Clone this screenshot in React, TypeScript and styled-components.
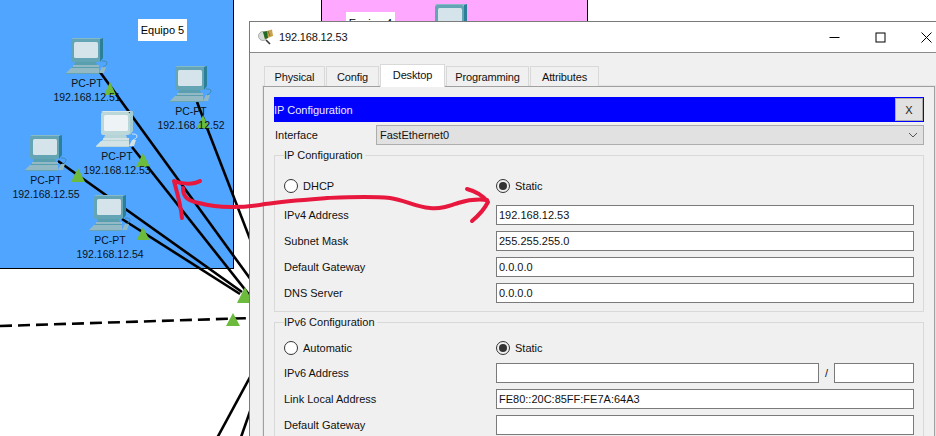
import React from "react"
import styled, { createGlobalStyle } from "styled-components"

const GlobalStyle = createGlobalStyle`
  body {
    margin: 0;
    background: #fff;
    font-family: "Liberation Sans", Arial, sans-serif;
  }
`

const Desktop = styled.div`
  position: relative;
  width: 936px;
  height: 436px;
  overflow: hidden;
  background: #fff;
`

const Zone = styled.div<{ $x: number; $w: number; $h: number; $color: string }>`
  position: absolute;
  left: ${props => props.$x}px;
  top: 0;
  width: ${props => props.$w}px;
  height: ${props => props.$h}px;
  background: ${props => props.$color};
  border: 1px solid #000;
  border-top: none;
  box-sizing: border-box;
`

const ZoneLabel = styled.div<{ $x: number; $y: number }>`
  position: absolute;
  left: ${props => props.$x}px;
  top: ${props => props.$y}px;
  width: 49px;
  height: 22px;
  background: #fff;
  color: #000;
  font-size: 11px;
  line-height: 22px;
  text-align: center;
`

const LinkLayer = styled.svg`
  position: absolute;
  left: 0;
  top: 0;
`

const Node = styled.div<{ $cx: number; $y: number }>`
  position: absolute;
  left: ${props => props.$cx - 45}px;
  top: ${props => props.$y}px;
  width: 90px;
  display: flex;
  flex-direction: column;
  align-items: center;
  color: #0b1320;
  font-size: 10.5px;
  line-height: 14px;
`

const NodeIcon = styled.svg`
  display: block;
`

const Window = styled.div`
  position: absolute;
  left: 249px;
  top: 21px;
  width: 688px;
  height: 500px;
  box-sizing: border-box;
  border: 1px solid #7a7a7a;
  background: #f0f0f0;
  color: #111;
  font-size: 11px;
`

const TitleBar = styled.div`
  height: 30px;
  display: flex;
  align-items: center;
  gap: 5px;
  padding-left: 8px;
  background: #fff;
  border-bottom: 1px solid #8a8a8a;
`

const TitleText = styled.div`
  flex: 1;
  font-size: 11px;
  letter-spacing: -0.15px;
  color: #111;
`

const WindowControls = styled.div`
  display: flex;
  align-items: center;
  gap: 35px;
  padding-right: 4px;
`

const WindowBody = styled.div`
  padding: 11px 1px 0 13px;
`

const TabRow = styled.div`
  display: flex;
  align-items: flex-end;
  gap: 1px;
  height: 22px;
  padding-left: 1px;
`

const Tab = styled.div<{ $width: number; $active?: boolean }>`
  position: relative;
  width: ${props => props.$width}px;
  height: ${props => (props.$active ? 23 : 20)}px;
  margin-bottom: ${props => (props.$active ? -1 : 0)}px;
  box-sizing: border-box;
  display: flex;
  align-items: center;
  justify-content: center;
  background: ${props => (props.$active ? "#fff" : "#f0f0f0")};
  border: 1px solid #d9d9d9;
  border-bottom: none;
  padding-bottom: ${props => (props.$active ? 3 : 0)}px;
  letter-spacing: -0.15px;
`

const Panel = styled.div`
  border: 1px solid #a0a0a0;
  padding: 10px;
  height: 400px;
  outline: 1px solid #e3e3e3;
`

const BlueBar = styled.div`
  height: 25px;
  display: flex;
  align-items: center;
  justify-content: space-between;
  background: #0000ff;
  color: #eef;
  padding-right: 1px;
`

const CloseButton = styled.div`
  width: 28px;
  height: 23px;
  box-sizing: border-box;
  display: flex;
  align-items: center;
  justify-content: center;
  background: #e1e1e1;
  border: 1px solid #adadad;
  color: #222;
  font-size: 11px;
`

const InterfaceRow = styled.div`
  display: flex;
  align-items: center;
  margin-top: 3px;
  height: 20px;
`

const InterfaceLabel = styled.div`
  width: 102px;
  padding-left: 1px;
  box-sizing: border-box;
`

const Select = styled.div`
  flex: 1;
  height: 20px;
  box-sizing: border-box;
  display: flex;
  align-items: center;
  justify-content: space-between;
  padding: 0 5px 0 3px;
  background: #e1e1e1;
  border: 1px solid #adadad;
`

const Group = styled.fieldset<{ $gapTop: number; $padTop: number; $height: number }>`
  margin: ${props => props.$gapTop}px 0 0;
  padding: ${props => props.$padTop}px 9px 0;
  height: ${props => props.$height}px;
  box-sizing: border-box;
  border: 1px solid #d9d9d9;
  min-width: 0;
`

const GroupTitle = styled.legend`
  padding: 0 2px 0 0;
  margin-left: 0;
  line-height: 14px;
  height: 14px;
`

const ChoiceRow = styled.div<{ $after: number }>`
  display: grid;
  grid-template-columns: 212px 1fr;
  height: 20px;
  align-items: center;
  margin-bottom: ${props => props.$after}px;
`

const Choice = styled.div`
  display: flex;
  align-items: center;
  gap: 5px;
`

const Radio = styled.span<{ $on?: boolean }>`
  width: 14px;
  height: 14px;
  box-sizing: border-box;
  display: flex;
  align-items: center;
  justify-content: center;
  border-radius: 50%;
  border: 1px solid #333;
  background: ${props => (props.$on ? "#f0f0f0" : "#fff")};

  &::after {
    content: "";
    width: 8px;
    height: 8px;
    border-radius: 50%;
    background: ${props => (props.$on ? "#333" : "transparent")};
  }
`

const FieldRow = styled.div`
  display: grid;
  grid-template-columns: 212px 1fr;
  height: 20px;
  align-items: center;
  margin-bottom: 6px;
`

const Field = styled.div`
  height: 20px;
  box-sizing: border-box;
  border: 1px solid #7a7a7a;
  background: #fff;
  padding-left: 2px;
  line-height: 18px;
  font-size: 11px;
  color: #111;
`

const PrefixFields = styled.div`
  display: grid;
  grid-template-columns: 323px 15px 80px;
  align-items: center;
`

const Slash = styled.div`
  text-align: center;
`

type Palette = { top: string; frame: string; side: string; screen: string; stand: string; key: string; line: string }

const normal: Palette = {
  top: "#86bac6",
  frame: "#64a5b5",
  side: "#2c7f98",
  screen: "#d5e4ea",
  stand: "#5a9fb0",
  key: "#93b9c4",
  line: "#3e8497",
}

const selected: Palette = {
  top: "#d8e6e8",
  frame: "#bcd7da",
  side: "#a3cbd2",
  screen: "#eef4f6",
  stand: "#b5d4d8",
  key: "#d3e3e5",
  line: "#f2f7f8",
}

function PcIcon({ colors }: { colors: Palette }) {
  return (
    <NodeIcon width={42} height={38} viewBox="0 0 42 38">
      <polygon points="5,1 7,0 37,0 34,1" fill={colors.top} />
      <polygon points="34,1 37,0 37,20 34,24" fill={colors.side} />
      <rect x="5" y="1" width="29" height="23" rx="2" fill={colors.frame} />
      <rect x="8" y="4" width="24" height="16" rx="1.5" fill={colors.screen} />
      <polygon points="9,24 30,24 31,27 8,27" fill={colors.stand} />
      <rect x="7" y="27" width="26" height="2" fill={colors.key} />
      <rect x="6" y="29" width="27" height="1" fill={colors.stand} />
      <polygon points="5,30 33,30 33,35 0,35" fill={colors.key} />
      <rect x="0" y="35" width="33" height="1" fill={colors.frame} />
      <polygon points="36,29 40,29 38,35 33,35" fill={colors.key} />
      <path d="M37 29c2-1 4-2 4-4s-3-2-5-2" fill="none" stroke={colors.line} strokeWidth="0.8" />
    </NodeIcon>
  )
}

const nodes = [
  { name: "PC-PT", ip: "192.168.12.51", cx: 87, y: 38 },
  { name: "PC-PT", ip: "192.168.12.52", cx: 191, y: 66 },
  { name: "PC-PT", ip: "192.168.12.53", cx: 117, y: 111, colors: selected },
  { name: "PC-PT", ip: "192.168.12.55", cx: 46, y: 135 },
  { name: "PC-PT", ip: "192.168.12.54", cx: 110, y: 195 },
]

const links = [
  "M100 72L262 295",
  "M197 102L262 270",
  "M132 147L262 311",
  "M58 161L242 292",
  "M122 219L240 294",
  "M256 366L216 440",
  "M254 400L240 440",
]

const triangles = [
  [110, 82, 6, 13],
  [203, 115, 6, 13],
  [143, 153, 7, 14],
  [78, 168, 7, 14],
  [143, 227, 6.5, 13],
  [245, 287, 8, 16],
  [233, 313, 7, 13],
]

function Links() {
  return (
    <LinkLayer width={260} height={436} viewBox="0 0 260 436">
      {links.map(d => (
        <path key={d} d={d} stroke="#000" strokeWidth={2.6} fill="none" />
      ))}
      <path d="M0 326L252 318" stroke="#000" strokeWidth={2.6} strokeDasharray="12 6" fill="none" />
      {triangles.map(([x, y, half, h]) => (
        <polygon key={`${x}-${y}`} points={`${x},${y} ${x + half},${y + h} ${x - half},${y + h}`} fill="#6cbb3c" />
      ))}
    </LinkLayer>
  )
}

function Scribble() {
  return (
    <LinkLayer width={936} height={436} viewBox="0 0 936 436">
      <g fill="none" stroke="#e8173d" strokeWidth={4} strokeLinecap="round" strokeLinejoin="round">
        <path d="M182 218C181 206 177 192 174 181C181 184 193 185 200 181" />
        <path d="M183 188C183 198 189 201 199 203C210 206 220 207 231 207C245 207 255 206 265 204C285 201 300 200 327 198C350 197 370 196 390 198C405 200 415 207 430 208C442 209 449 206 458 203C468 200 478 199 487 200" />
        <path d="M467 189C475 191 483 196 488 202C484 210 478 216 472 221" />
      </g>
    </LinkLayer>
  )
}

function TitleIcon() {
  return (
    <svg width={16} height={16} viewBox="0 0 16 16">
      <circle cx="5" cy="7" r="4.5" fill="#d8dcd8" stroke="#9aa09a" strokeWidth="0.8" />
      <path d="M8 11l4 4" stroke="#333" strokeWidth="1.6" />
      <polygon points="5,3 14,0.5 15,7 7,10" fill="#c8a24e" />
      <polygon points="5,3 9,2 10,9 7,10" fill="#1f6b23" />
      <path d="M10 2l2 5" stroke="#7a5a1f" strokeWidth="0.8" />
    </svg>
  )
}

function WindowButtons() {
  return (
    <WindowControls>
      <svg width={11} height={11} viewBox="0 0 11 11">
        <path d="M0.5 5.5H10.5" stroke="#000" strokeWidth="1" />
      </svg>
      <svg width={11} height={11} viewBox="0 0 11 11">
        <rect x="1" y="1" width="9" height="9" fill="none" stroke="#000" strokeWidth="1" />
      </svg>
      <svg width={11} height={11} viewBox="0 0 11 11">
        <path d="M0.5 0.5L10.5 10.5M10.5 0.5L0.5 10.5" stroke="#000" strokeWidth="1" />
      </svg>
    </WindowControls>
  )
}

const tabs = [
  { label: "Physical", width: 61 },
  { label: "Config", width: 53 },
  { label: "Desktop", width: 65, active: true },
  { label: "Programming", width: 83 },
  { label: "Attributes", width: 69 },
]

function ConfigWindow() {
  return (
    <Window>
      <TitleBar>
        <TitleIcon />
        <TitleText>192.168.12.53</TitleText>
        <WindowButtons />
      </TitleBar>
      <WindowBody>
        <TabRow>
          {tabs.map(tab => (
            <Tab key={tab.label} $width={tab.width} $active={tab.active}>
              {tab.label}
            </Tab>
          ))}
        </TabRow>
        <Panel>
          <BlueBar>
            IP Configuration
            <CloseButton>X</CloseButton>
          </BlueBar>
          <InterfaceRow>
            <InterfaceLabel>Interface</InterfaceLabel>
            <Select>
              FastEthernet0
              <svg width={10} height={6} viewBox="0 0 10 6">
                <path d="M1 1l4 4 4-4" fill="none" stroke="#555" strokeWidth="1" />
              </svg>
            </Select>
          </InterfaceRow>
          <Group $gapTop={3} $padTop={14} $height={164}>
            <GroupTitle>IP Configuration</GroupTitle>
            <ChoiceRow $after={9}>
              <Choice>
                <Radio />
                DHCP
              </Choice>
              <Choice>
                <Radio $on />
                Static
              </Choice>
            </ChoiceRow>
            <FieldRow>
              IPv4 Address
              <Field>192.168.12.53</Field>
            </FieldRow>
            <FieldRow>
              Subnet Mask
              <Field>255.255.255.0</Field>
            </FieldRow>
            <FieldRow>
              Default Gateway
              <Field>0.0.0.0</Field>
            </FieldRow>
            <FieldRow>
              DNS Server
              <Field>0.0.0.0</Field>
            </FieldRow>
          </Group>
          <Group $gapTop={3} $padTop={9} $height={180}>
            <GroupTitle>IPv6 Configuration</GroupTitle>
            <ChoiceRow $after={5}>
              <Choice>
                <Radio />
                Automatic
              </Choice>
              <Choice>
                <Radio $on />
                Static
              </Choice>
            </ChoiceRow>
            <FieldRow>
              IPv6 Address
              <PrefixFields>
                <Field />
                <Slash>/</Slash>
                <Field />
              </PrefixFields>
            </FieldRow>
            <FieldRow>
              Link Local Address
              <Field>FE80::20C:85FF:FE7A:64A3</Field>
            </FieldRow>
            <FieldRow>
              Default Gateway
              <Field />
            </FieldRow>
          </Group>
        </Panel>
      </WindowBody>
    </Window>
  )
}

export default function App() {
  return (
    <Desktop>
      <GlobalStyle />
      <Zone $x={-1} $w={235} $h={269} $color="#4fa5ff" />
      <Zone $x={321} $w={267} $h={60} $color="#ffa8ff" />
      <ZoneLabel $x={138} $y={19}>Equipo 5</ZoneLabel>
      <ZoneLabel $x={346} $y={12}>Equipo 4</ZoneLabel>
      <Node $cx={451} $y={4}>
        <PcIcon colors={normal} />
      </Node>
      <Links />
      {nodes.map(node => (
        <Node key={node.ip} $cx={node.cx} $y={node.y}>
          <PcIcon colors={node.colors ?? normal} />
          <div>{node.name}</div>
          <div>{node.ip}</div>
        </Node>
      ))}
      <ConfigWindow />
      <Scribble />
    </Desktop>
  )
}
